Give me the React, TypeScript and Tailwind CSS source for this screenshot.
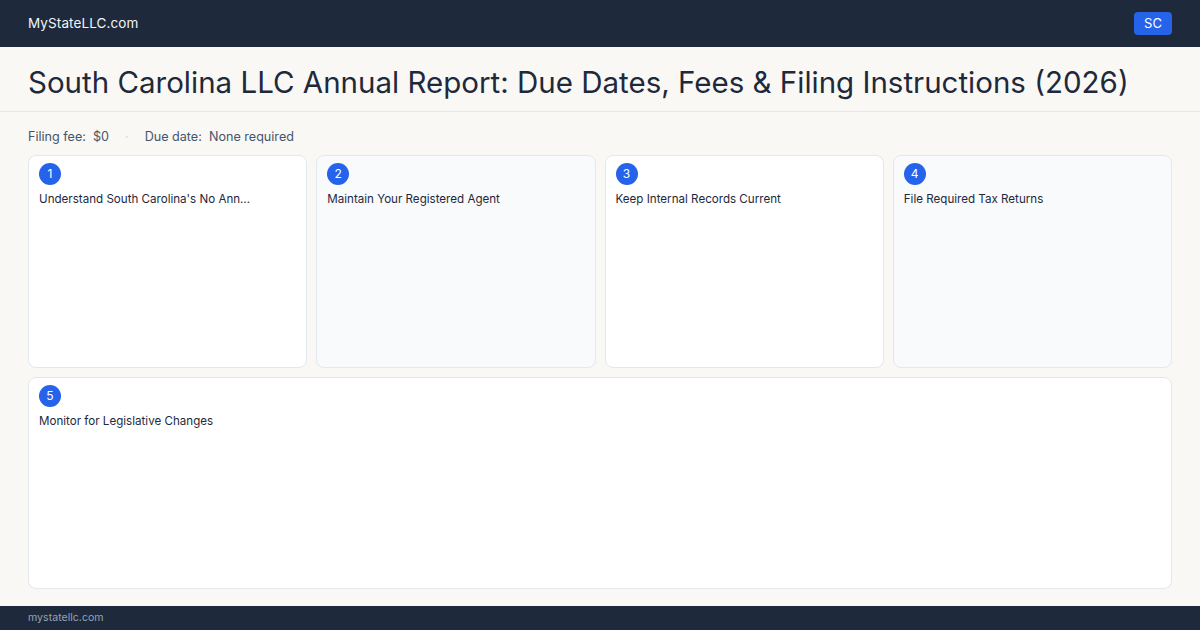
import { FC } from "react";

type Step = { n: number; title: string; tint: boolean; wide?: boolean };

const steps: Step[] = [
	{ n: 1, title: "Understand South Carolina's No Ann…", tint: false },
	{ n: 2, title: "Maintain Your Registered Agent", tint: true },
	{ n: 3, title: "Keep Internal Records Current", tint: false },
	{ n: 4, title: "File Required Tax Returns", tint: true },
	{ n: 5, title: "Monitor for Legislative Changes", tint: false, wide: true },
];

const StepCard: FC<Step> = ({ n, title, tint, wide }) => {
	return (
		<div
			className={`flex flex-col rounded-lg border border-[#e2e8f0] px-[10px] pt-[7px] ${
				tint ? "bg-[#f8fafc]" : "bg-white"
			} ${wide ? "col-span-4" : ""}`}
		>
			<div className="flex h-[22px] w-[22px] items-center justify-center rounded-full bg-[#2563eb] text-[12px] text-white">
				{n}
			</div>
			<div className="mt-[6px] text-[11.6px] leading-4 text-[#1e293b]">{title}</div>
		</div>
	);
};

const App: FC = () => {
	return (
		<div
			className="flex h-[630px] w-[1200px] flex-col bg-[#f9f8f5]"
			style={{ fontFamily: "Inter, 'Noto Sans', sans-serif" }}
		>
			<header className="flex h-[47px] shrink-0 items-center justify-between bg-[#1e293b] px-7">
				<span className="text-[13.5px] tracking-[0.1px] text-[#f1f5f9]">MyStateLLC.com</span>
				<span className="flex h-[23px] w-[38px] items-center justify-center rounded bg-[#2563eb] text-[13px] text-white">
					SC
				</span>
			</header>
			<div className="flex h-[65px] shrink-0 items-center border-b border-[#e2e8f0] px-7 pt-[5px]">
				<h1 className="text-[29.5px] leading-9 text-[#1e293b]">
					South Carolina LLC Annual Report: Due Dates, Fees &amp; Filing Instructions (2026)
				</h1>
			</div>
			<main className="flex min-h-0 flex-1 flex-col px-7 pb-[17px]">
				<div className="flex h-[43px] shrink-0 items-center gap-4 pt-[7px] text-[12.6px] text-[#475569]">
					<span>Filing fee:&nbsp; $0</span>
					<span className="text-[#cbd5e1]">·</span>
					<span>Due date:&nbsp; None required</span>
				</div>
				<div className="grid flex-1 grid-cols-4 grid-rows-2 gap-[9px]">
					{steps.map((s) => (
						<StepCard key={s.n} {...s} />
					))}
				</div>
			</main>
			<footer className="flex h-[24px] shrink-0 items-center bg-[#1e293b] px-7 text-[10.6px] text-[#94a3b8]">
				mystatellc.com
			</footer>
		</div>
	);
};

export default App;
